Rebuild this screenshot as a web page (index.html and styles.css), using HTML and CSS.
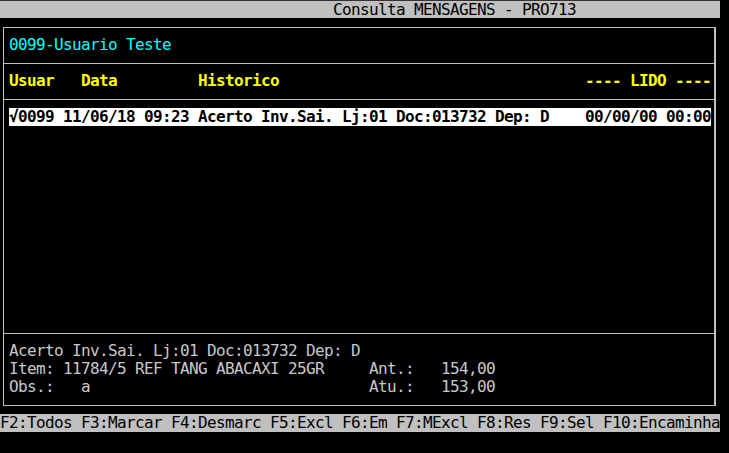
FILE: index.html
```html
<!DOCTYPE html>
<html lang="pt-BR">
<head>
  <meta charset="UTF-8" />
  <meta name="viewport" content="width=device-width, initial-scale=1.0" />
  <title>Consulta MENSAGENS - PRO713</title>
  <link rel="stylesheet" href="styles.css">
</head>
<body>
  <div class="screen">
    <div class="titlebar">Consulta MENSAGENS - PRO713</div>

    <div class="box">
      <div class="section user">0099-Usuario Teste</div>

      <div class="section header">
        <span>Usuar</span>
        <span>Data</span>
        <span>Historico</span>
        <span>---- LIDO ----</span>
      </div>

      <div class="section list">
        <div class="msg selected">
          <span>√0099 11/06/18 09:23 Acerto Inv.Sai. Lj:01 Doc:013732 Dep: D</span>
          <span>00/00/00 00:00</span>
        </div>
      </div>

      <div class="section detail">
        <div class="line">Acerto Inv.Sai. Lj:01 Doc:013732 Dep: D</div>
        <div class="line cols">
          <span>Item: 11784/5 REF TANG ABACAXI 25GR</span>
          <span>Ant.:</span>
          <span>154,00</span>
        </div>
        <div class="line cols">
          <span>Obs.:   a</span>
          <span>Atu.:</span>
          <span>153,00</span>
        </div>
      </div>
    </div>

    <div class="keys">F2:Todos F3:Marcar F4:Desmarc F5:Excl F6:Em F7:MExcl F8:Res F9:Sel F10:Encaminha</div>
  </div>
</body>
</html>
```

FILE: styles.css
```css
body {
  margin: 0;
  background-color: #000;
  font-family: "DejaVu Sans Mono", "Liberation Mono", monospace;
  font-size: 16px;
  letter-spacing: -0.632px;
  line-height: 18px;
  color: #c8c8c8;
}
.screen {
  width: 720px;
}
.titlebar {
  height: 17px;
  border-top: 1px solid #333;
  background-color: #c0c0c0;
  color: #000;
  padding-left: 333px;
  white-space: pre;
}
.box {
  width: 713px;
  box-sizing: border-box;
  margin: 9px 0 0 3px;
  border: 1px solid #c0c0c0;
  border-right-width: 2px;
}
.section {
  padding: 8px 0 9px 5px;
  border-bottom: 1px solid #c0c0c0;
  height: 18px;
}
.section.detail {
  border-bottom: none;
  height: 54px;
}
.user {
  color: #00ffff;
}
.header {
  display: grid;
  grid-template-columns: 72px 117px 387px 126px;
  color: #ffff00;
  font-weight: bold;
  white-space: pre;
}
.list {
  height: 216px;
}
.msg {
  display: flex;
  justify-content: space-between;
  width: 702px;
  height: 18px;
  white-space: pre;
}
.msg.selected {
  background-color: #fff;
  color: #000;
  font-weight: bold;
}
.line {
  height: 18px;
  white-space: pre;
}
.cols {
  display: grid;
  grid-template-columns: 360px 72px auto;
}
.keys {
  margin-top: 8px;
  height: 18px;
  background-color: #c0c0c0;
  color: #000;
  white-space: pre;
}
```
